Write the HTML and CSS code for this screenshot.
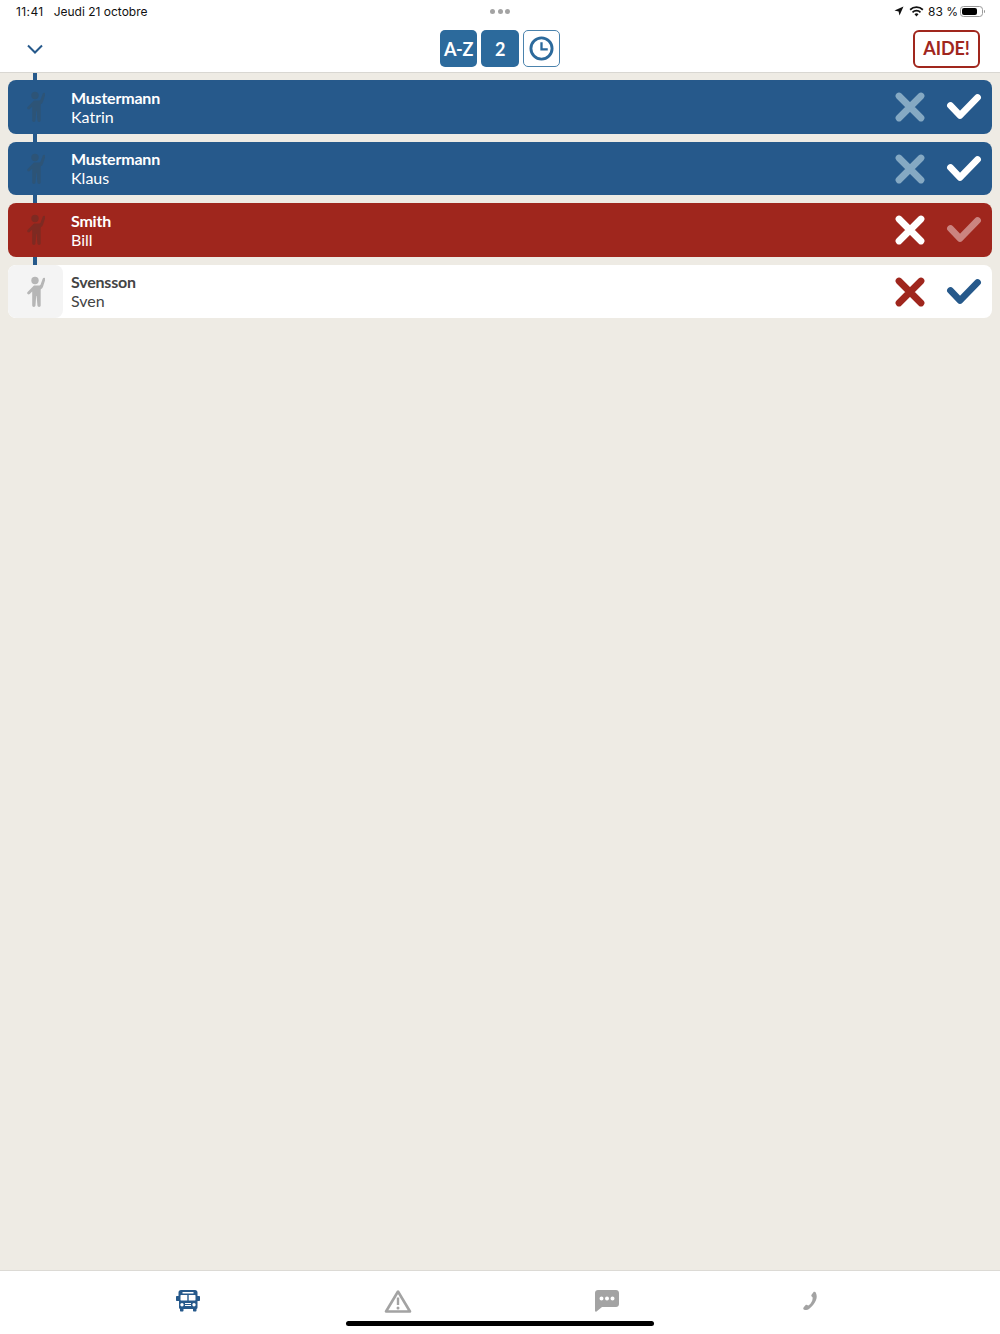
FILE: index.html
```html
<!DOCTYPE html>
<html lang="fr">
<head>
<meta charset="utf-8">
<title>Liste des passagers</title>
<link rel="stylesheet" href="styles.css">
</head>
<body>
<svg class="defs" width="0" height="0" aria-hidden="true">
  <defs>
    <symbol id="person" viewBox="0 0 20 32">
      <circle cx="10" cy="4.500" r="3.700"/>
      <path d="M6.800 9.600h6.900c1 0 1.600-.4 2-1.400l2-5.500c.3-.8 1-1.200 1.700-1 .8.200 1.200 1 .9 1.800l-2.300 7.300c-.4 1.200-1.100 2-2.300 2.600v15.900c0 1-.7 1.700-1.600 1.700s-1.600-.7-1.700-1.700l-.8-9.300h-.4l-.7 9.300c-.1 1-.8 1.700-1.700 1.700s-1.600-.7-1.600-1.700V15.500l-2.500 2.500c-.6.600-1.500.6-2.100 0s-.6-1.500 0-2.100l5.400-5.400c.5-.3.900-.9 1.300-.9z"/>
    </symbol>
    <symbol id="cross" viewBox="0 0 32 32">
      <path d="M5 5 27 27M27 5 5 27" fill="none" stroke="currentColor" stroke-width="6.800" stroke-linecap="round"/>
    </symbol>
    <symbol id="check" viewBox="0 0 36 28">
      <path d="M4.500 12.500 14 22.500 31.500 4.500" fill="none" stroke="currentColor" stroke-width="6.800" stroke-linecap="round" stroke-linejoin="round"/>
    </symbol>
  </defs>
</svg>
<div class="app">
  <header class="header">
    <div class="status">
      <div class="status-left"><span class="time">11:41</span><span>Jeudi 21 octobre</span></div>
      <div class="status-dots"><i></i><i></i><i></i></div>
      <div class="status-right">
        <svg class="loc" viewBox="0 0 10 10"><path d="M9.500.5 5.500 9.500 4.600 5.400.5 4.500z"/></svg>
        <svg class="wifi" viewBox="0 0 16 12"><path d="M8 11.500 5.800 9.100a3.100 3.100 0 0 1 4.400 0zM4.300 7.600 3 6.200a7 7 0 0 1 10 0l-1.300 1.400a5.200 5.200 0 0 0-7.400 0zM1.700 4.800.4 3.400a10.800 10.800 0 0 1 15.200 0l-1.300 1.400a9 9 0 0 0-12.600 0z"/></svg>
        <span class="pct">83 %</span>
        <span class="battery"><span class="battery-level"></span></span>
      </div>
    </div>
    <div class="toolbar">
      <svg class="chevron" viewBox="0 0 16 10"><path d="M1 1.500 8 8.500 15 1.500" fill="none" stroke="currentColor" stroke-width="2"/></svg>
      <div class="sorts">
        <span class="sort sort-on">A-Z</span>
        <span class="sort sort-on">2</span>
        <span class="sort sort-off">
          <svg class="clock" viewBox="0 0 26 26"><circle cx="13" cy="13" r="11" fill="none" stroke="currentColor" stroke-width="3"/><path d="M13 6.500V14h6.500" fill="none" stroke="currentColor" stroke-width="2.400"/></svg>
        </span>
      </div>
      <span class="help">AIDE!</span>
    </div>
  </header>

  <main class="list">
    <div class="row row-blue">
      <div class="avatar"><svg class="person"><use href="#person"/></svg></div>
      <div class="name"><strong>Mustermann</strong><span>Katrin</span></div>
      <svg class="x x-dim"><use href="#cross"/></svg>
      <svg class="v v-white"><use href="#check"/></svg>
    </div>
    <div class="row row-blue">
      <div class="avatar"><svg class="person"><use href="#person"/></svg></div>
      <div class="name"><strong>Mustermann</strong><span>Klaus</span></div>
      <svg class="x x-dim"><use href="#cross"/></svg>
      <svg class="v v-white"><use href="#check"/></svg>
    </div>
    <div class="row row-red">
      <div class="avatar"><svg class="person"><use href="#person"/></svg></div>
      <div class="name"><strong>Smith</strong><span>Bill</span></div>
      <svg class="x x-white"><use href="#cross"/></svg>
      <svg class="v v-dim"><use href="#check"/></svg>
    </div>
    <div class="row row-white">
      <div class="avatar"><svg class="person"><use href="#person"/></svg></div>
      <div class="name"><strong>Svensson</strong><span>Sven</span></div>
      <svg class="x x-red"><use href="#cross"/></svg>
      <svg class="v v-blue"><use href="#check"/></svg>
    </div>
  </main>

  <nav class="tabs">
    <div class="tab tab-on">
      <svg class="ic-bus" viewBox="0 0 24 22"><path fill-rule="evenodd" d="M5 0h14c1.500 0 2.500 1 2.500 2.500V6H23c.6 0 1 .4 1 1v3c0 .6-.4 1-1 1h-1.500v6.500c0 .8-.4 1.300-1 1.500v1.500c0 .6-.4 1-1 1h-1.500c-.6 0-1-.4-1-1V19H7.500v1.500c0 .6-.4 1-1 1H5c-.6 0-1-.4-1-1V19c-.6-.2-1-.7-1-1.500V11H1c-.6 0-1-.4-1-1V7c0-.6.400-1 1-1h1.500V2.500C2.500 1 3.500 0 5 0zM6.500 2v1.500h11V2zM5 5c-.3 0-.5.200-.5.500v4.500c0 .3.200.5.500.5h6.300V5zm7.700 0v5.500H19c.3 0 .5-.2.500-.5V5.500c0-.3-.2-.5-.5-.5zM6 13a1.700 1.700 0 1 0 0 3.400A1.700 1.700 0 0 0 6 13zm12 0a1.700 1.700 0 1 0 0 3.400 1.700 1.700 0 0 0 0-3.400zM9 13v1h6v-1zm0 2v1h6v-1z"/></svg>
    </div>
    <div class="tab">
      <svg class="ic-warn" viewBox="0 0 28 24"><path d="M14 2.500 2 22.500h24z" fill="none" stroke="currentColor" stroke-width="2.600" stroke-linejoin="round"/><path d="M14 8.500v7.500" stroke="currentColor" stroke-width="2.400"/><circle cx="14" cy="19" r="1.500"/></svg>
    </div>
    <div class="tab">
      <svg class="ic-chat" viewBox="0 0 24 22"><path fill-rule="evenodd" d="M3 0h18c1.700 0 3 1.300 3 3v11c0 1.700-1.300 3-3 3H7l-5.500 4.500c-.6.500-1.500.1-1.500-.7V3C0 1.300 1.300 0 3 0zm3.500 6.500a2 2 0 1 0 0 4 2 2 0 0 0 0-4zm5.500 0a2 2 0 1 0 0 4 2 2 0 0 0 0-4zm5.500 0a2 2 0 1 0 0 4 2 2 0 0 0 0-4z"/></svg>
    </div>
    <div class="tab">
      <svg class="ic-phone" viewBox="0 0 16 20"><path d="M11.500.2c.9-.4 1.800 0 2.200.9 1.300 2.800 1.300 5.500 0 8.400-1.400 3.500-3.900 6.400-7.300 8.900-.9.700-2 1.100-3 1.200-1.400.1-2.600-.3-3-1.200-.3-.6-.2-1.100.2-1.600l2-2.200c.5-.5 1-.6 1.600-.4l1.700.6c1.700-1.400 3-3.200 3.900-5.200.500-1.300.6-2.600.4-3.600L9 4.800c-.3-.5-.2-1 .1-1.500z"/></svg>
    </div>
    <span class="home"></span>
  </nav>
</div>
</body>
</html>
```
FILE: styles.css
```css
* { box-sizing: border-box; }
html, body { margin: 0; height: 100%; }
body {
  font-family: "Lato", "Liberation Sans", sans-serif;
  background: #eeebe4;
  color: #3d3d3d;
  overflow: hidden;
}
.defs { position: absolute; }
.app { display: flex; flex-direction: column; height: 1334px; }

.header { background: #fff; height: 73px; flex: none; border-bottom: 1px solid #d9d7d2; display: flex; flex-direction: column; }
.status {
  height: 24px;
  display: grid;
  grid-template-columns: 1fr auto 1fr;
  align-items: center;
  padding: 0 15px 2px;
  font-family: "Inter", "Liberation Sans", sans-serif;
  font-size: 12px;
  color: #111;
}
.status-left { display: flex; gap: 10px; padding-left: 1px; }
.time { letter-spacing: .4px; }
.status-dots { display: flex; gap: 2.500px; }
.status-dots i { width: 5px; height: 5px; border-radius: 50%; background: #a3a3a3; }
.status-right { display: flex; align-items: center; justify-content: flex-end; gap: 4px; }
.loc { width: 10px; height: 10px; fill: #111; }
.wifi { width: 15px; height: 11px; fill: #111; margin-left: 1px; }
.pct { margin-right: -2px; }
.battery { width: 23px; height: 11px; border: 1px solid #999; border-radius: 3.500px; padding: 1px; display: block; position: relative; margin: 0 2px 0 0; }
.battery::after { content: ""; position: absolute; right: -3px; top: 3px; width: 1.500px; height: 3px; background: #999; border-radius: 0 1px 1px 0; }
.battery-level { display: block; width: 80%; height: 100%; background: #000; border-radius: 2px; }

.toolbar { flex: 1; display: grid; grid-template-columns: 1fr auto 1fr; align-items: center; padding: 0 20px; }
.chevron { width: 16px; height: 10px; color: #26598b; margin: 2px 0 0 7px; }
.sorts { display: flex; gap: 4px; margin-top: 1px; }
.sort { width: 37.500px; height: 37px; border-radius: 5px; display: flex; align-items: center; justify-content: center; font-weight: 700; font-size: 18px; letter-spacing: -.3px; }
.sort-on { background: #2c6a9c; color: #fff; }
.sort-off { background: #fff; border: 1px solid #4b83ad; color: #2c6a9c; }
.clock { width: 25px; height: 25px; }
.help {
  justify-self: end;
  width: 67px; height: 38px;
  border: 2px solid #a0261d; border-radius: 6px;
  color: #a0261d; font-weight: 700; font-size: 18px; letter-spacing: -.1px;
  display: flex; align-items: center; justify-content: center;
  padding-bottom: 1px;
  margin-top: 1px;
}

.list { flex: 1; position: relative; display: flex; flex-direction: column; gap: 8px; padding: 7px 8px 0; }
.list::before { content: ""; position: absolute; left: 33px; top: 0; width: 4px; height: 192px; background: #26598b; }

.row { position: relative; height: 53.500px; border-radius: 8px; display: flex; align-items: center; padding-right: 10px; overflow: hidden; }
.row-blue { background: #26598b; color: #fff; }
.row-red { background: #9f261d; color: #fff; }
.row-white { background: #fff; color: #444; }
.avatar { width: 55px; height: 100%; flex: none; display: flex; align-items: center; justify-content: center; padding-right: 1px; }
.row-white .avatar { background: #f4f4f4; border-radius: 8px; }
.person { width: 20px; height: 32px; margin-top: 1px; }
.row-blue .person { fill: #2d5477; }
.row-red .person { fill: #7e2a22; }
.row-white .person { fill: #b6b6b6; }
.name { flex: 1; display: flex; flex-direction: column; padding-left: 8px; font-size: 16px; line-height: 19px; }
.name strong { font-weight: 700; letter-spacing: -.2px; }
.x { width: 32px; height: 32px; flex: none; margin: 1px 20px 0 0; }
.v { width: 36px; height: 28px; flex: none; margin-top: 1px; }
.x-dim { color: #85a9c3; }
.x-white { color: #fff; }
.x-red { color: #9f261d; }
.v-white { color: #fff; }
.v-dim { color: #cb8480; }
.v-blue { color: #26598b; }

.tabs { position: relative; flex: none; height: 64px; background: #fff; border-top: 1px solid #dcdad5; display: grid; grid-template-columns: 377px 209px 209px 1fr; padding-bottom: 4px; color: #a3a3a3; fill: #a3a3a3; }
.tab { display: flex; align-items: center; justify-content: flex-end; }
.tab-on { color: #26598b; fill: #26598b; }
.ic-bus { width: 24px; height: 22px; margin-right: 177px; }
.tab:nth-child(2) { justify-content: flex-start; margin-left: 7px; }
.ic-warn { width: 28px; height: 24px; }
.tab:nth-child(3) { justify-content: flex-start; margin-left: 9px; }
.ic-chat { width: 24px; height: 22px; }
.tab:nth-child(4) { justify-content: flex-start; margin-left: 8px; }
.ic-phone { width: 15px; height: 20px; }
.home { position: absolute; left: 346px; bottom: 8px; width: 308px; height: 5px; border-radius: 3px; background: #000; }
```
